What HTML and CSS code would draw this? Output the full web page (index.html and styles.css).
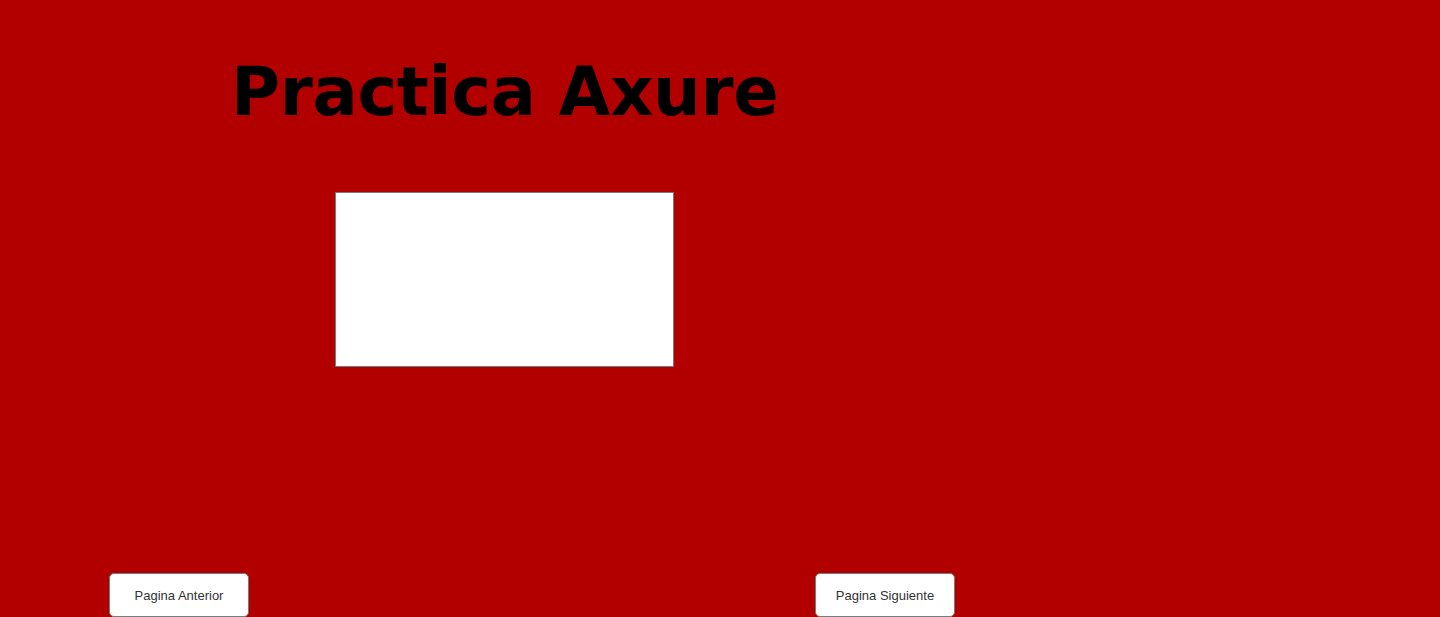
FILE: index.html
```html
<!DOCTYPE html>
<html lang="es">

<head>
    <meta charset="UTF-8">
    <meta name="viewport" content="width=device-width, initial-scale=1.0">
    <title>Practica Axure</title>
    <link rel="stylesheet" href="styles.css">
</head>

<body>
    <div class="page">
        <h1 class="title">Practica Axure</h1>

        <div class="panel"></div>

        <div class="nav">
            <button class="nav-btn prev">Pagina Anterior</button>
            <button class="nav-btn next">Pagina Siguiente</button>
        </div>
    </div>
</body>

</html>
```

FILE: styles.css
```css
body {
    margin: 0;
    background-color: #b20000;
    font-family: "Liberation Sans", Arial, sans-serif;
    overflow: hidden;
}

.page {
    height: 617px;
    display: flex;
    flex-direction: column;
}

.title {
    margin: 0;
    padding: 52px 0 0 231px;
    font-family: "DejaVu Sans", sans-serif;
    font-weight: 700;
    font-size: 67px;
    line-height: 80px;
    letter-spacing: -0.3px;
    color: #000;
}

.panel {
    margin: 60px 0 0 335px;
    width: 337px;
    height: 173px;
    background: #fff;
    border: 1px solid #797979;
}

.nav {
    margin-top: auto;
    display: flex;
    gap: 566px;
    padding-left: 109px;
}

.nav-btn {
    width: 140px;
    height: 44px;
    background: #fff;
    border: 1px solid #797979;
    border-radius: 5px;
    font-family: "Liberation Sans", Arial, sans-serif;
    font-size: 13px;
    color: #333;
    padding: 0;
}
```
